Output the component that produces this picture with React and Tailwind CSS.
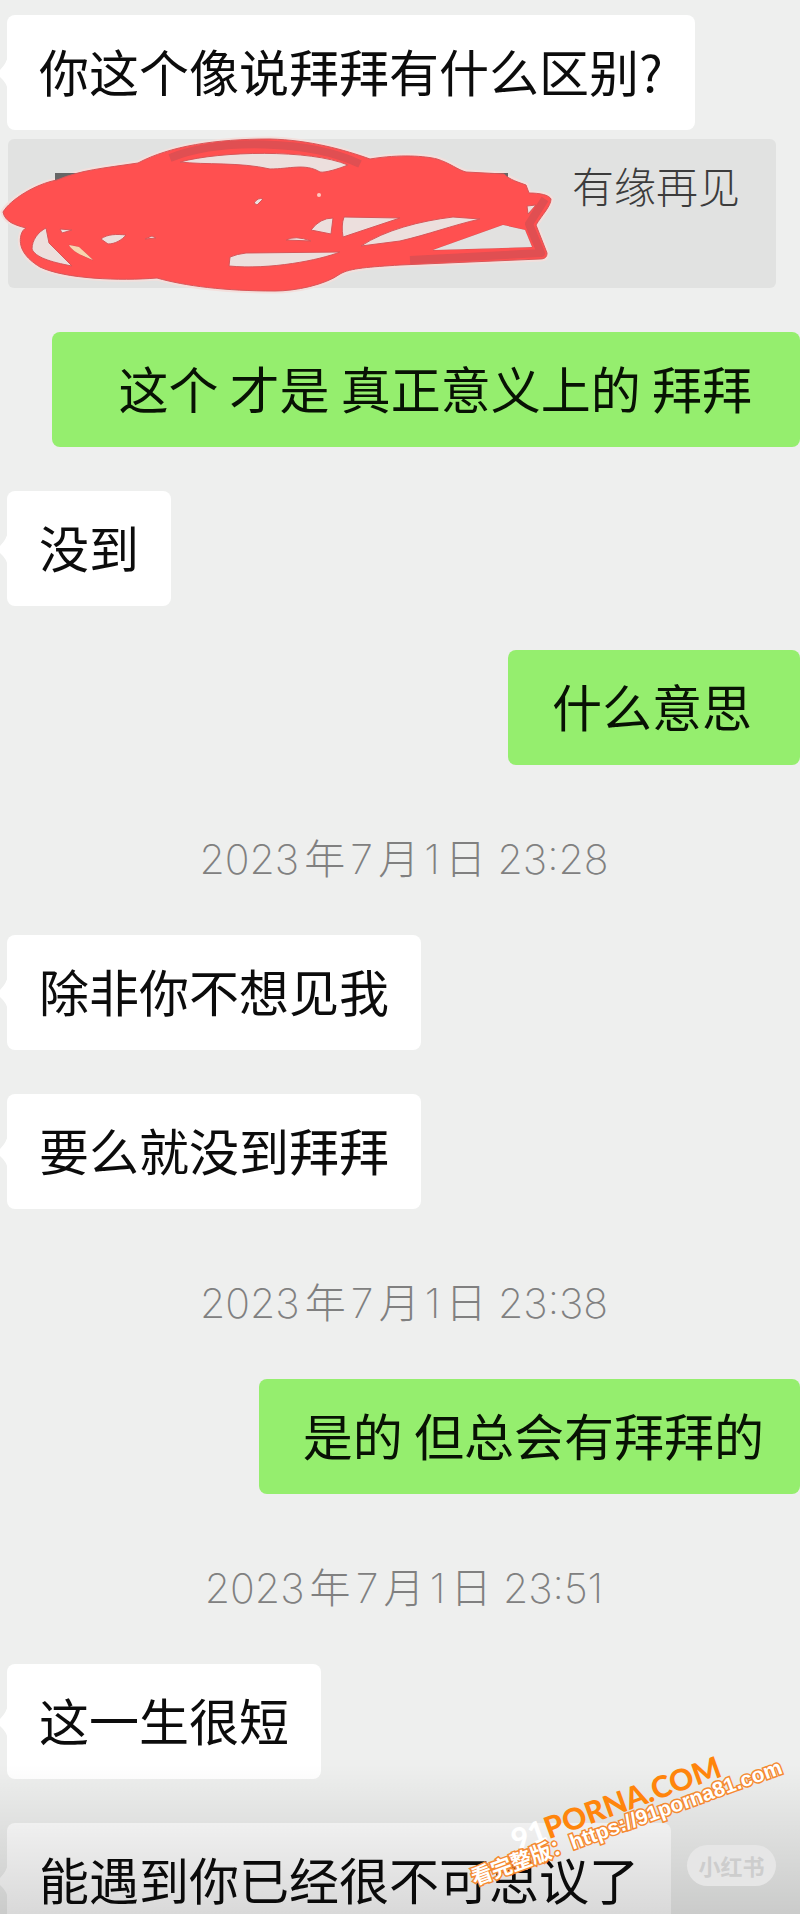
import clsx from "clsx"

const messages = [
  { id: 1, type: "left", text: "你这个像说拜拜有什么区别?" },
  { id: 2, type: "quote", text: "有缘再见" },
  { id: 3, type: "right", text: "\u00a0\u00a0这个 才是 真正意义上的 拜拜" },
  { id: 4, type: "left", text: "没到" },
  { id: 5, type: "right", text: "什么意思" },
  { id: 6, type: "time", text: "2023年7月1日 23:28" },
  { id: 7, type: "left", text: "除非你不想见我" },
  { id: 8, type: "left", text: "要么就没到拜拜" },
  { id: 9, type: "time", text: "2023年7月1日 23:38" },
  { id: 10, type: "right", text: "是的 但总会有拜拜的", tight: true },
  { id: 11, type: "time", text: "2023年7月1日 23:51" },
  { id: 12, type: "left", text: "这一生很短" },
  { id: 13, type: "left", text: "能遇到你已经很不可思议了" },
]

// outer edge of the red scribble, also used for its light halo
const outline =
  "M3 212 C10 200 35 184 57 180 C80 170 105 168 138 163 C170 146 215 139 270 139 C310 140 345 150 370 159 C400 154 425 156 437 159 C450 163 458 170 466 172 L504 174 C510 180 518 182 526 185 L529 193 C540 193 549 195 551 199 C551 206 542 215 536 225 L547 253 C547 257 545 259 540 259 L400 265 C370 267 350 268 340 274 C325 285 295 291 275 291 C225 291 185 286 157 278 C120 281 65 279 40 267 C25 258 18 247 21 235 C22 231 24 229 26 228 C15 225 5 222 3 212 Z"

const holes =
  "M180 162 C220 151 310 149 348 165 C338 169 325 173 320 172 C305 163 290 169 270 169 C240 162 205 165 180 162 Z M46 228 L49 243 L72 266 C50 262 35 257 32 249 C32 240 38 232 46 228 Z M60 229 L72 230 L62 233 Z M69 245 L79 247 L93 260 C83 256 73 252 69 245 Z M101 239 C107 234 117 234 126 235 C122 240 115 244 108 244 Z M145 239 L152 236 L156 238 Z M254 203 Q258 197 263 199 L257 205 Z M286 240 Q295 235 311 241 Z M311 230 Q320 218 333 218 L331 234 Z M344 217 L400 218 L343 237 Q341 225 344 217 Z M361 246 C385 230 420 221 453 217 L480 219 C450 226 430 234 400 241 Z M230 257 Q237 254 246 253 L340 252 C320 260 270 270 229 266 Z M433 250 L503 225 L525 230 L532 247 Z M527 206 L536 205 L528 214 Z"

function LeftBubble({ text }) {
  return (
    <div className="relative ml-[7px] mb-11 self-start rounded-lg bg-white px-8 pt-[26px] pb-[30px] text-[50px] leading-[59px] text-[#0c0c0c]">
      <svg className="absolute -left-[7px] top-10 h-9 w-2" viewBox="0 0 8 36" aria-hidden="true">
        <path d="M8 0 Q7 8 0 15 V22 Q7 28 8 36 Z" fill="#fff" />
      </svg>
      {text}
    </div>
  )
}

function RightBubble({ text, tight }) {
  return (
    <div
      className={clsx(
        "mb-11 self-end rounded-lg bg-[#95ee6e] pt-[26px] pb-[30px] pl-11 text-[50px] leading-[59px] text-[#081204]",
        tight ? "pr-9" : "pr-12"
      )}
    >
      {text}
    </div>
  )
}

function Scribble() {
  return (
    <svg className="absolute left-0 -top-1 h-[160px] w-[560px]" viewBox="0 135 560 160" aria-hidden="true">
      <path d={outline} fill="#ecdfdd" stroke="#f3dfdc" strokeWidth="5" />
      <path d="M55 173h40v10h-40zM490 173h18v6h-18z" fill="#666" />
      <path d={outline + holes} fill="#ff5050" fillRule="evenodd" stroke="#d85558" strokeWidth="1" />
      <path d="M433 250 L503 225 L525 230 L532 247 Z" fill="#e2e1e0" />
      <path d="M69 245 L79 247 L93 260 C83 256 73 252 69 245 Z" fill="#f8d5ae" />
      <path
        d="M170 158 C220 138 310 140 360 164 M410 260 L541 253 L529 224 L545 199"
        fill="none"
        stroke="#e04f52"
        strokeWidth="8"
        strokeLinejoin="round"
      />
      <circle cx="319" cy="195" r="2" fill="#ffc9c0" />
    </svg>
  )
}

function Quote({ text }) {
  return (
    <div className="relative -mt-[35px] mb-11 pl-2 pr-6">
      <div className="flex h-[149px] justify-end rounded-md bg-[#e1e2e1] pr-9 pt-4 text-[42px] leading-[60px] font-light text-[#3c3c3c]">
        {text}
      </div>
      <Scribble />
    </div>
  )
}

function Timestamp({ text }) {
  return (
    <time className="-mt-11 flex h-[170px] items-center justify-center pt-5 pl-2 font-['Inter','Noto_Sans_CJK_SC',sans-serif] text-[41px] font-extralight text-[#808080] [text-autospace:normal]">
      {text}
    </time>
  )
}

function Watermark() {
  return (
    <div className="pointer-events-none absolute bottom-0 right-0 h-[194px] w-[400px]">
      <div className="absolute left-[112px] top-[104px] origin-left -rotate-[20deg] whitespace-nowrap font-['Lato',sans-serif] text-[30px] leading-8 font-black text-[#ff850c]">
        <span className="text-white">91</span>PORNA.COM
      </div>
      <div className="absolute left-[72px] top-[147px] origin-left -rotate-[20deg] whitespace-nowrap font-['Liberation_Sans','Noto_Sans_CJK_SC',sans-serif] text-[21px] leading-6 font-bold text-white [-webkit-text-stroke:3px_#f58a32] [paint-order:stroke_fill]">
        看完整版：https://91porna81.com
      </div>
      <div className="absolute bottom-7 right-6 h-[41px] w-[89px] rounded-full bg-[#e6e6e6] text-center text-[22px] leading-10 font-bold text-[#cdcdcd]">
        小红书
      </div>
    </div>
  )
}

function App() {
  return (
    <main className="relative flex h-screen flex-col overflow-hidden bg-[#eeefee] pt-[15px] font-['Noto_Sans_CJK_SC',sans-serif] *:shrink-0">
      {messages.map((msg) => {
        if (msg.type === "left") return <LeftBubble key={msg.id} text={msg.text} />
        if (msg.type === "right") return <RightBubble key={msg.id} text={msg.text} tight={msg.tight} />
        if (msg.type === "quote") return <Quote key={msg.id} text={msg.text} />
        return <Timestamp key={msg.id} text={msg.text} />
      })}
      <div className="pointer-events-none absolute inset-x-0 bottom-0 h-[150px] bg-linear-to-b from-transparent to-black/15" />
      <Watermark />
    </main>
  )
}

export default App
